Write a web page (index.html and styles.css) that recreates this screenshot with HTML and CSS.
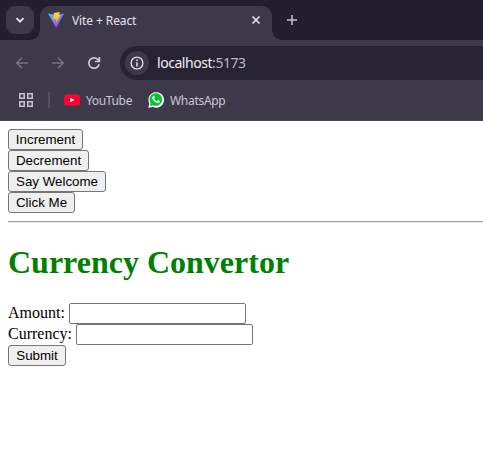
FILE: index.html
```html
<!DOCTYPE html>
<html lang="en">
<head>
<meta charset="utf-8">
<title>Vite + React</title>
<link rel="stylesheet" href="styles.css">
</head>
<body>
<header class="browser">
  <div class="tabstrip">
    <div class="tab-search"><svg width="28" height="28" viewBox="0 0 28 28"><path d="M10.5 12.2l3.5 3.5 3.5-3.5" fill="none" stroke="#e8e4f0" stroke-width="1.8"/></svg></div>
    <div class="tab">
      <svg class="vite" width="16" height="16" viewBox="0 0 16 16">
        <defs>
          <linearGradient id="v" x1="0" y1="0" x2=".6" y2="1"><stop offset="0" stop-color="#41c8ff"/><stop offset="1" stop-color="#b03cfe"/></linearGradient>
          <linearGradient id="b" x1="0" y1="0" x2="0" y2="1"><stop offset="0" stop-color="#ffdd35"/><stop offset="1" stop-color="#ffa800"/></linearGradient>
        </defs>
        <path d="M0 1.6L8 3l8-1.4L8.2 15.8z" fill="url(#v)"/>
        <path d="M5.7 1.1L11.7 0 11 3.2l1.5-.2-4.6 8.3.3-4.2-2.9.6z" fill="url(#b)"/>
      </svg>
      <span class="tab-title">Vite + React</span>
      <svg class="close" width="10" height="10" viewBox="0 0 10 10"><path d="M1.5 1.5l7 7m0-7l-7 7" stroke="#e8e5ee" stroke-width="1.6"/></svg>
    </div>
    <svg class="new-tab" width="12" height="12" viewBox="0 0 12 12"><path d="M6 1v10M1 6h10" stroke="#c5bdd8" stroke-width="1.5"/></svg>
  </div>
  <div class="toolbar">
    <svg class="nav" width="14" height="14" viewBox="0 0 14 14"><path d="M13 7H2M7 1.7L1.7 7 7 12.3" fill="none" stroke="#77728a" stroke-width="1.5"/></svg>
    <svg class="nav" width="14" height="14" viewBox="0 0 14 14"><path d="M1 7h11M7 1.7L12.3 7 7 12.3" fill="none" stroke="#77728a" stroke-width="1.5"/></svg>
    <svg class="nav" width="14" height="14" viewBox="0 0 14 14"><path d="M12.1 8.2A5.2 5.2 0 1 1 10.8 3.4L12.4 5M12.4 1v4.5H8" fill="none" stroke="#cdc4de" stroke-width="1.7"/></svg>
    <div class="omnibox">
      <div class="info"><svg width="14" height="14" viewBox="0 0 14 14"><circle cx="7" cy="7" r="5.9" fill="none" stroke="#dedae8" stroke-width="1.4"/><path d="M7 3.5v1.6M7 6.2v4.2" stroke="#dedae8" stroke-width="1.6"/></svg></div>
      <span class="url">localhost<span class="port">:5173</span></span>
    </div>
  </div>
  <div class="bookmarks">
    <svg width="14" height="14" viewBox="0 0 14 14"><path d="M.8.8h4.4v4.4H.8zM8.8.8h4.4v4.4H8.8zM.8 8.8h4.4v4.4H.8zM8.8 8.8h4.4v4.4H8.8z" fill="none" stroke="#c6c1c9" stroke-width="1.6"/></svg>
    <i class="divider"></i>
    <svg class="youtube" width="16" height="12" viewBox="0 0 16 12"><rect y=".4" width="16" height="11.2" rx="2.6" fill="#ff0033"/><path d="M6.3 3.7v4.6l4-2.3z" fill="#fff"/></svg>
    <span class="bm yt">YouTube</span>
    <svg class="whatsapp" width="16" height="16" viewBox="0 0 16 16"><path d="M.2 15.8l1.2-4.1A7.8 7.8 0 1 1 4.9 15z" fill="#fff"/><path d="M1.9 14.1l.8-2.8a6.3 6.3 0 1 1 2.5 2z" fill="#05c434"/><path d="M5.1 4.2c.5-.5 1-.4 1.2 0l.6 1.5-.8 1.1c.6 1.2 1.4 1.9 2.8 2.5l.9-1.1c.3-.3 2.1.7 2.1.9 0 1.2-1 2-2.1 1.9-2.7-.3-5.5-2.9-5.6-5 0-.8.4-1.3.9-1.8z" fill="#fff"/></svg>
    <span class="bm wa">WhatsApp</span>
  </div>
</header>
<main>
  <div class="line"><button>Increment</button></div>
  <div class="line"><button class="dec">Decrement</button></div>
  <div class="line"><button class="say">Say Welcome</button></div>
  <div class="line"><button class="click">Click Me</button></div>
  <hr>
  <h1>Currency Convertor</h1>
  <form>
    <div class="line"><label for="amount">Amount:</label><input id="amount" type="text"></div>
    <div class="line"><label class="currency" for="currency">Currency:</label><input id="currency" type="text"></div>
    <div class="line"><button class="submit" type="button">Submit</button></div>
  </form>
</main>
</body>
</html>
```
FILE: styles.css
```css
* { box-sizing: border-box; }
html { overflow: hidden; }
body { margin: 0; background: #fff; color: #000; font: 16px "Liberation Serif", serif; }
svg { display: block; flex: none; }

.browser { height: 121px; background: #3d394b; border-bottom: 1px solid #4a4657; font-family: "Noto Sans", sans-serif; overflow: hidden; }
.tabstrip { height: 40px; display: flex; background: #221e2d; padding: 6px 0 0 6px; }
.tab-search { width: 28px; height: 28px; border-radius: 9px; background: #3d394b; }
.tab { position: relative; width: 232px; height: 34px; margin-left: 6px; padding: 0 11px 6px 8px; display: flex; align-items: center; background: #3d394b; border-radius: 10px 10px 0 0; }
.tab::before, .tab::after { content: ""; position: absolute; bottom: 0; width: 10px; height: 10px; }
.tab::before { left: -10px; background: radial-gradient(circle at 0 0, transparent 9.5px, #3d394b 10px); }
.tab::after { right: -10px; background: radial-gradient(circle at 100% 0, transparent 9.5px, #3d394b 10px); }
.tab-title { margin: 2px 0 0 8px; font-size: 12px; line-height: 20px; letter-spacing: -.1px; color: #e5e1ec; white-space: nowrap; }
.close { margin-left: auto; }
.new-tab { margin: 8px 0 0 14px; }

.toolbar { height: 46px; display: flex; align-items: center; padding-left: 15px; }
.nav { margin-right: 22px; }
.omnibox { flex: 1; height: 34px; margin-left: -3px; padding-left: 5px; display: flex; align-items: center; background: #272335; border-radius: 17px 0 0 17px; }
.info { width: 24px; height: 24px; border-radius: 50%; background: #3d394b; display: flex; align-items: center; justify-content: center; }
.url { margin-left: 8px; font-size: 14px; letter-spacing: -.45px; line-height: 18px; padding-bottom: 1px; color: #f0edf5; }
.port { color: #bdb6c9; }

.bookmarks { height: 28px; display: flex; align-items: center; padding-left: 19px; }
.divider { width: 2px; height: 16px; margin: 0 14px 0 15px; background: #555063; }
.bm { margin-left: 6px; font-size: 12px; letter-spacing: -.35px; color: #cbc5d5; white-space: nowrap; }
.yt { width: 46px; }
.wa { letter-spacing: -.3px; }
.whatsapp { margin-left: 16px; }

main { padding: 8px 0 0 8px; }
.line { height: 21px; display: flex; align-items: center; }
button { width: 75px; height: 21px; padding: 0; border: 1px solid #767676; border-radius: 3px; background: #efefef; color: #000; font: 13.333px "Liberation Sans", Arial, sans-serif; text-align: center; white-space: nowrap; }
.dec { width: 81px; }
.say { width: 98px; }
.click { width: 67px; }
.submit { width: 58px; }
hr { height: 2px; margin: 8px 0; border: 0; border-top: 1px solid #9a9a9a; border-bottom: 1px solid #eee; }
h1 { margin: 20px 0 22px; font-size: 32px; line-height: 38px; font-weight: bold; color: green; }
label { width: 61px; line-height: 19px; padding-bottom: 2px; }
.currency { width: 68px; }
input { width: 177px; height: 21px; border: 1px solid #767676; border-radius: 2px; background: #fff; padding: 1px 2px; }
```
